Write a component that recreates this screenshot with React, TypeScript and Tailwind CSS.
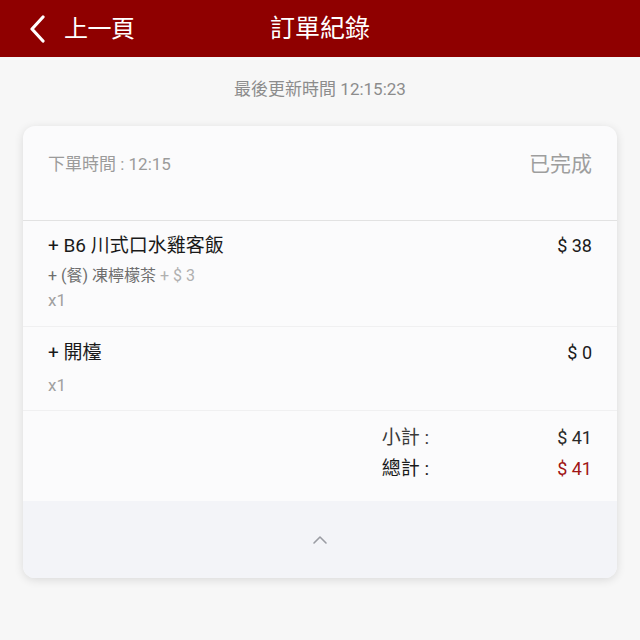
import React from "react";

const font = { fontFamily: 'Roboto, "Noto Sans CJK TC", sans-serif' };

const BackIcon = () => (
  <svg width="18" height="28" viewBox="0 0 18 28" fill="none">
    <path
      d="M15 2 L4 14 L15 26"
      stroke="white"
      strokeWidth="3.2"
      strokeLinecap="round"
      strokeLinejoin="round"
    />
  </svg>
);

const ChevronUp = () => (
  <svg width="16" height="10" viewBox="0 0 16 10" fill="none">
    <path
      d="M2 8 L8 2 L14 8"
      stroke="#9a9ca3"
      strokeWidth="1.6"
      strokeLinecap="round"
      strokeLinejoin="round"
    />
  </svg>
);

export default function App() {
  return (
    <div className="min-h-[640px] w-full bg-[#f7f7f7]" style={font}>
      {/* Header */}
      <div className="relative flex h-[57px] items-center bg-[#8f0000] text-white">
        <div className="flex items-center pl-[28px]">
          <BackIcon />
          <span className="ml-[18px] text-[24px] leading-none tracking-[-0.5px]">上一頁</span>
        </div>
        <span className="absolute left-1/2 -translate-x-1/2 text-[25px] leading-none">
          訂單紀錄
        </span>
      </div>

      <div className="pt-[20px] pb-[25px] text-center text-[17px] leading-[24px] text-[#8c8c8c]">
        最後更新時間 12:15:23
      </div>

      {/* Card */}
      <div className="mx-[23px] overflow-hidden rounded-[12px] bg-[#fbfbfc] shadow-[0_2px_10px_rgba(0,0,0,0.12)]">
        <div className="flex items-center justify-between px-[25px] pt-[26px] pb-[44px] border-b border-[#e2e2e2]">
          <span className="text-[17px] leading-[24px] text-[#9b9b9b]">下單時間 : 12:15</span>
          <span className="text-[21px] leading-[24px] text-[#9e9e9e]">已完成</span>
        </div>

        <div className="px-[25px] pt-[13px] pb-[14px] border-b border-[#f0f0f1]">
          <div className="flex justify-between text-[19px] leading-[24px] text-[#1a1a1a]">
            <span>+ B6 川式口水雞客飯</span>
            <span className="text-[18px]">$ 38</span>
          </div>
          <div className="mt-[6px] text-[16px] leading-[24px] text-[#6e6e6e]">
            + (餐) 凍檸檬茶 <span className="text-[#b0b0b0]">+ $ 3</span>
          </div>
          <div className="text-[17px] leading-[24px] text-[#a0a0a0]">x1</div>
        </div>

        <div className="px-[25px] pt-[14px] pb-[13px] border-b border-[#f0f0f1]">
          <div className="flex justify-between text-[19px] leading-[24px] text-[#1a1a1a]">
            <span>+ 開檯</span>
            <span className="text-[18px]">$ 0</span>
          </div>
          <div className="mt-[8px] text-[17px] leading-[24px] text-[#a0a0a0]">x1</div>
        </div>

        <div className="px-[25px] pt-[15px] pb-[20px] text-[19px] leading-[24px]">
          <div className="flex justify-end">
            <span className="text-[#3a3a3a]">小計 :</span>
            <span className="w-[163px] text-right text-[18px] text-[#2a2a2a]">$ 41</span>
          </div>
          <div className="mt-[7px] flex justify-end">
            <span className="text-[#1a1a1a]">總計 :</span>
            <span className="w-[163px] text-right text-[18px] text-[#a01515]">$ 41</span>
          </div>
        </div>

        <div className="flex h-[77px] items-center justify-center bg-[#f3f4f8]">
          <ChevronUp />
        </div>
      </div>
    </div>
  );
}
